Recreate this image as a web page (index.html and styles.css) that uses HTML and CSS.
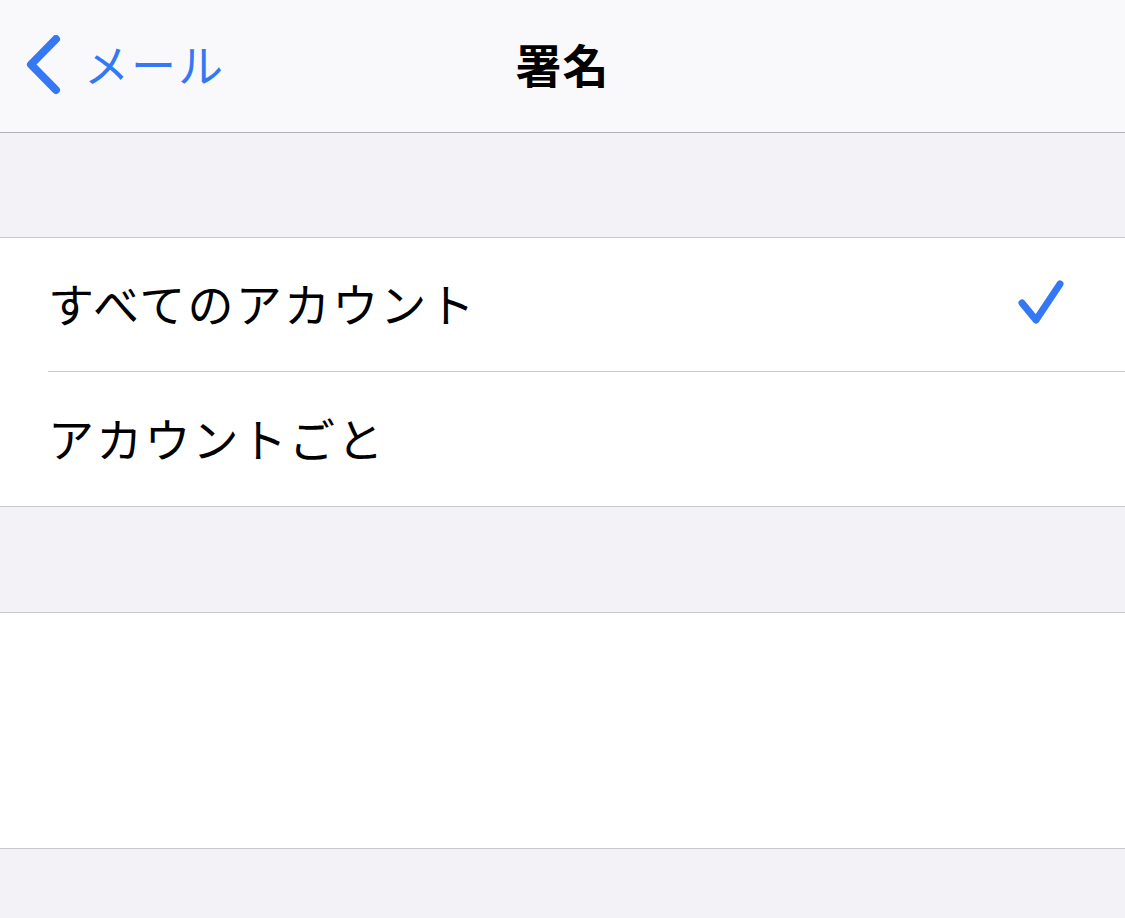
FILE: index.html
```html
<!DOCTYPE html>
<html lang="ja">
  <head>
    <meta charset="UTF-8" />
    <meta name="viewport" content="width=device-width, initial-scale=1.0" />
    <title>署名</title>
    <link rel="stylesheet" href="styles.css">
  </head>
  <body>
    <div class="navbar">
      <div class="back">
        <svg class="chevron" width="40" height="60" viewBox="0 0 40 60">
          <polyline points="33,4 8,29.5 33,55" fill="none" stroke="#3478f6" stroke-width="8" stroke-linecap="round" stroke-linejoin="round" />
        </svg>
        <span class="back-label">メール</span>
      </div>
      <h1 class="title">署名</h1>
      <div></div>
    </div>

    <div class="spacer first"></div>

    <div class="group">
      <div class="row">
        <span class="row-label">すべてのアカウント</span>
        <svg class="check" width="52" height="52" viewBox="0 0 52 52">
          <polyline points="5,24 19,41 43,5" fill="none" stroke="#3478f6" stroke-width="7" stroke-linecap="round" stroke-linejoin="round" />
        </svg>
      </div>
      <div class="row">
        <span class="row-label">アカウントごと</span>
      </div>
    </div>

    <div class="spacer second"></div>

    <div class="editor"></div>
  </body>
</html>
```

FILE: styles.css
```css
* {
  margin: 0;
  padding: 0;
  box-sizing: border-box;
  font-family: "Noto Sans CJK JP", "Noto Sans", sans-serif;
}

body {
  background: #f2f2f7;
  min-height: 100vh;
  color: #000000;
}

.navbar {
  height: 133px;
  background: #f9f9fb;
  border-bottom: 1px solid #b2b2b6;
  display: grid;
  grid-template-columns: 1fr auto 1fr;
  align-items: center;
}

.back {
  display: flex;
  align-items: center;
  padding-left: 23px;
  color: #3478f6;
}

.chevron {
  display: block;
  margin-bottom: 2px;
}

.back-label {
  font-size: 45px;
  margin-left: 21px;
  line-height: 1;
  letter-spacing: 2px;
  padding-bottom: 6px;
}

.title {
  font-size: 46px;
  font-weight: 700;
  line-height: 1;
  letter-spacing: 1px;
  padding-bottom: 6px;
}

.spacer {
  border-bottom: 1px solid #c8c7cc;
}

.spacer.first {
  height: 105px;
}

.spacer.second {
  height: 106px;
}

.group {
  background: #ffffff;
  border-bottom: 1px solid #c8c7cc;
  padding-left: 48px;
}

.row {
  display: flex;
  align-items: center;
  justify-content: space-between;
  height: 134px;
  padding-right: 56px;
}

.row:first-child {
  border-bottom: 1px solid #c8c7cc;
}

.row-label {
  font-size: 46px;
  line-height: 1;
  letter-spacing: 2.2px;
  padding-bottom: 5px;
}

.check {
  display: block;
}

.editor {
  height: 236px;
  background: #ffffff;
  border-bottom: 1px solid #c8c7cc;
}
```
